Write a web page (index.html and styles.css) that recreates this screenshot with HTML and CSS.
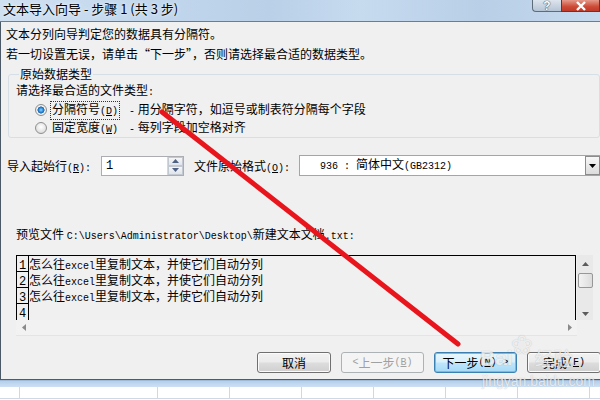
FILE: index.html
```html
<!DOCTYPE html>
<html lang="zh">
<head>
<meta charset="utf-8">
<title>文本导入向导</title>
<link rel="stylesheet" href="styles.css">
</head>
<body>
<div class="screen">
  <div class="titlebar">
    <span class="title">文本导入向导 - 步骤 1 (共 3 步)</span>
    <div class="caption-btns">
      <div class="cbtn help">?</div>
      <div class="cbtn close">
        <svg width="12" height="10" viewBox="0 0 12 10"><path d="M2 1 L10 9 M10 1 L2 9" stroke="#fff" stroke-width="2.4" fill="none"/></svg>
      </div>
    </div>
  </div>

  <div class="dialog">
    <p class="intro">文本分列向导判定您的数据具有分隔符。</p>
    <p class="intro">若一切设置无误，请单击“下一步”，否则请选择最合适的数据类型。</p>

    <fieldset class="group">
      <legend>原始数据类型</legend>
      <div class="prompt">请选择最合适的文件类型<span class="m">:</span></div>
      <div class="radio-row">
        <span class="radio checked"></span>
        <span class="rlabel focus">分隔符号<span class="m">(<u>D</u>)</span></span>
        <span class="rdesc"><span class="m">-</span> 用分隔字符，如逗号或制表符分隔每个字段</span>
      </div>
      <div class="radio-row">
        <span class="radio"></span>
        <span class="rlabel">固定宽度<span class="m">(<u>W</u>)</span></span>
        <span class="rdesc"><span class="m">-</span> 每列字段加空格对齐</span>
      </div>
    </fieldset>

    <div class="import-row">
      <span class="lbl1">导入起始行<span class="m">(<u>R</u>):</span></span>
      <div class="spin">
        <span class="spin-val m">1</span>
        <div class="spin-btns">
          <span class="sb up"><svg width="7" height="4" viewBox="0 0 7 4"><path d="M0 4 L3.5 0 L7 4Z" fill="#4d6185"/></svg></span>
          <span class="sb down"><svg width="7" height="4" viewBox="0 0 7 4"><path d="M0 0 L3.5 4 L7 0Z" fill="#4d6185"/></svg></span>
        </div>
      </div>
      <span class="lbl2">文件原始格式<span class="m">(<u>O</u>):</span></span>
      <div class="select">
        <span class="sel-val"><span class="m">936 : </span>简体中文<span class="m">(GB2312)</span></span>
        <span class="sel-btn"><svg width="7" height="4" viewBox="0 0 7 4"><path d="M0 0 L3.5 4 L7 0Z" fill="#000"/></svg></span>
      </div>
    </div>

    <div class="preview-label">预览文件 <span class="m">C:\Users\Administrator\Desktop\</span>新建文本文档<span class="m">.txt:</span></div>

    <div class="preview">
      <div class="preview-main">
        <div class="pgrid">
          <div class="prow"><span class="pnum m">1</span><span class="ptext">怎么往<span class="m">excel</span>里复制文本，并使它们自动分列</span></div>
          <div class="prow"><span class="pnum m">2</span><span class="ptext">怎么往<span class="m">excel</span>里复制文本，并使它们自动分列</span></div>
          <div class="prow"><span class="pnum m">3</span><span class="ptext">怎么往<span class="m">excel</span>里复制文本，并使它们自动分列</span></div>
          <div class="prow last"><span class="pnum m">4</span><span class="ptext"></span></div>
        </div>
        <div class="vscroll">
          <span class="arrow"><svg width="7" height="4" viewBox="0 0 7 4"><path d="M0 4 L3.5 0 L7 4Z" fill="#5b5b5b"/></svg></span>
          <span class="thumb"></span>
          <span class="vfill"></span>
          <span class="arrow"><svg width="7" height="4" viewBox="0 0 7 4"><path d="M0 0 L3.5 4 L7 0Z" fill="#5b5b5b"/></svg></span>
        </div>
      </div>
      <div class="hscroll">
        <svg width="4" height="7" viewBox="0 0 4 7"><path d="M4 0 L0 3.5 L4 7Z" fill="#8a8a8a"/></svg>
        <svg width="4" height="7" viewBox="0 0 4 7"><path d="M0 0 L4 3.5 L0 7Z" fill="#8a8a8a"/></svg>
      </div>
    </div>

    <div class="buttons">
      <div class="btn w74">取消</div>
      <div class="btn w83 disabled"><span class="m">&lt;</span> 上一步<span class="m">(<u>B</u>)</span></div>
      <div class="btn w83 default">下一步<span class="m">(<u>N</u>) &gt;</span></div>
      <div class="btn w74">完成<span class="m">(<u>F</u>)</span></div>
    </div>
  </div>

  <div class="excel">
    <div class="band"></div>
    <div class="sheet">
      <div class="col c0"></div>
      <div class="col c1"></div>
      <div class="col"></div>
      <div class="col"></div>
      <div class="col"></div>
      <div class="col"></div>
      <div class="col"></div>
      <div class="col"></div>
      <div class="col"></div>
    </div>
  </div>

  <svg class="annot" width="600" height="400" viewBox="0 0 600 400">
    <line x1="162" y1="112" x2="458" y2="344" stroke="#e8151d" stroke-width="5" stroke-linecap="round"/>
  </svg>

  <div class="watermark">
    <div class="wm-logo"><span class="wm-bai">Bai</span><span class="wm-paw">❀</span><span class="wm-jy">经验</span></div>
    <div class="wm-url">jingyan.baidu.com</div>
  </div>
</div>
</body>
</html>
```

FILE: styles.css
```css
* { box-sizing: border-box; }

html, body {
  margin: 0;
  padding: 0;
  width: 600px;
  height: 400px;
  overflow: hidden;
  background: #f0f0f0;
}

.screen {
  position: relative;
  width: 600px;
  height: 400px;
  overflow: hidden;
  display: flex;
  flex-direction: column;
  font-family: "Noto Sans CJK SC", "Liberation Sans", sans-serif;
  font-size: 12px;
  color: #000;
}

.m {
  font-family: "Liberation Mono", "DejaVu Sans Mono", monospace;
  font-size: 10px;
}

/* title bar */
.titlebar {
  height: 22px;
  flex: none;
  display: flex;
  align-items: flex-start;
  justify-content: space-between;
  background: linear-gradient(to right, #cfe0f1 0%, #c2d7ec 25%, #b9d0e8 45%, #c7dbef 60%, #b8cfe7 80%, #c6d9ed 100%);
  border-bottom: 1px solid #6f7c89;
}
.title {
  font-size: 13px;
  line-height: 17px;
  padding-left: 3px;
  color: #000;
  text-shadow: 0 0 4px #e6f0fa, 0 0 2px #eef5fc;
}
.caption-btns {
  display: flex;
  align-items: flex-start;
}
.cbtn {
  height: 12px;
  display: flex;
  align-items: center;
  justify-content: center;
  border: 1px solid #5e6c7a;
  border-top: none;
}
.help {
  width: 29px;
  border-radius: 0 0 0 4px;
  background: linear-gradient(#dde5ee, #b5c4d4);
  color: #fff;
  font-family: "Liberation Sans", sans-serif;
  font-weight: bold;
  font-size: 12px;
  line-height: 10px;
  text-shadow: 0 0 1px #333, 0 0 1px #333;
  border-right: none;
}
.close {
  width: 39px;
  background: linear-gradient(#e59a8c, #cc4b36 60%, #c0392a);
  border-color: #7a2b22;
}

/* dialog */
.dialog {
  flex: none;
  height: 358px;
  width: 640px;
  padding: 4px 0 0 5px;
  border-left: 1px solid #4b5866;
  border-bottom: 1px solid #4f5b68;
  background: #f0f0f0;
}
.intro {
  margin: 0 0 4px 0;
  line-height: 16px;
}

.group {
  margin: 0 0 0 2px;
  width: 592px;
  padding: 0 0 0 7px;
  border: 1px solid #d5dfe5;
  border-radius: 3px;
}
.group legend {
  padding: 0 1px;
  margin-left: 3px;
  line-height: 16px;
}
.prompt {
  line-height: 16px;
  margin-top: 0;
}
.radio-row {
  display: flex;
  align-items: center;
  height: 18px;
  padding-left: 19px;
}
.radio {
  width: 12px;
  height: 12px;
  border-radius: 50%;
  border: 1px solid #8e8f8f;
  background: radial-gradient(circle at 50% 40%, #ffffff 0%, #e6e6e6 55%, #cfcfcf 100%);
  margin-right: 3px;
  flex: none;
}
.radio.checked {
  background: radial-gradient(circle at 50% 50%, #8fd3ff 0%, #2c8ad6 30%, #1a5fa8 48%, #f4f4f4 52%, #dcdcdc 100%);
}
.rlabel {
  padding: 0 1px;
  line-height: 14px;
  border: 1px dotted transparent;
}
.rlabel.focus {
  border-color: #333;
}
.rdesc {
  margin-left: 9px;
  line-height: 16px;
}

.import-row {
  display: flex;
  align-items: center;
  margin-top: 17px;
  height: 21px;
}
.lbl1 {
  margin-left: 1px;
  width: 94px;
}
.spin {
  width: 83px;
  height: 20px;
  border: 1px solid #abadb3;
  background: #fff;
  display: flex;
  align-items: stretch;
  justify-content: space-between;
}
.spin-val {
  padding-left: 4px;
  font-size: 12px;
  line-height: 18px;
}
.spin-btns {
  width: 16px;
  display: flex;
  flex-direction: column;
  border-left: 1px solid #d6d6d6;
}
.sb {
  flex: 1;
  display: flex;
  align-items: center;
  justify-content: center;
  background: linear-gradient(#f6f6f6, #e0e4ea);
  border: 1px solid #c3c9d2;
}
.lbl2 {
  margin-left: 10px;
  width: 105px;
}
.select {
  width: 304px;
  height: 21px;
  border: 1px solid #a5a5a5;
  background: #fff;
  display: flex;
  align-items: center;
  justify-content: space-between;
}
.sel-val {
  padding-left: 20px;
  line-height: 18px;
}
.sel-val .m { font-size: 10px; }
.sel-btn {
  width: 15px;
  height: 19px;
  margin-right: 2px;
  display: flex;
  align-items: center;
  justify-content: center;
  background: linear-gradient(#f7f7f7, #dcdcdc);
  border: 1px solid #8c8c8c;
}

.preview-label {
  margin: 50px 0 0 10px;
  line-height: 16px;
}

.preview {
  margin: 10px 0 0 10px;
  width: 577px;
}
.preview-main {
  display: flex;
  height: 65px;
}
.pgrid {
  width: 560px;
  border: 1px solid #000;
  border-bottom: none;
  overflow: hidden;
}
.prow {
  display: flex;
  height: 16px;
}
.pnum {
  width: 12px;
  flex: none;
  border-right: 1px solid #000;
  border-bottom: 1px solid #000;
  font-size: 12px;
  line-height: 20px;
  text-align: center;
  overflow: hidden;
}
.prow.last .pnum { border-bottom: none; }
.ptext {
  line-height: 16px;
  padding-left: 0;
  white-space: nowrap;
}
.ptext .m { font-size: 10px; }
.vscroll {
  width: 16px;
  margin-left: 1px;
  display: flex;
  flex-direction: column;
  align-items: center;
  background: #e9e9e9;
  padding-top: 3px;
}
.vscroll .arrow {
  height: 12px;
  width: 15px;
  display: flex;
  align-items: center;
  justify-content: center;
}
.thumb {
  margin-top: 3px;
  width: 15px;
  height: 15px;
  border: 1px solid #979797;
  border-radius: 2px;
  background: linear-gradient(to right, #f3f3f3, #dcdcdc);
}
.vfill { flex: 1; }
.hscroll {
  height: 16px;
  width: 561px;
  display: flex;
  align-items: center;
  justify-content: space-between;
  padding: 0 5px 0 6px;
  background: #f2f2f2;
  border-bottom: 1px solid #e4e4e4;
}

.buttons {
  display: flex;
  margin: 16px 0 0 251px;
  gap: 10px;
}
.btn {
  height: 21px;
  border: 1px solid #707070;
  border-radius: 3px;
  background: linear-gradient(#f2f2f2 0%, #ebebeb 48%, #dddddd 52%, #cfcfcf 100%);
  display: flex;
  align-items: center;
  justify-content: center;
  line-height: 16px;
  box-shadow: inset 0 0 0 1px #fbfbfb;
}
.w74 { width: 74px; }
.w83 { width: 83px; }
.btn.disabled {
  color: #a0a0a0;
  border-color: #adb2b5;
  background: #f4f4f4;
  box-shadow: none;
}
.btn.default {
  border-color: #3c7fb1;
  box-shadow: inset 0 0 0 1px #48d0f8;
  background: linear-gradient(#eaf6fd 0%, #d9f0fc 48%, #bee6fd 52%, #a7d9f5 100%);
}

/* excel strip */
.excel {
  flex: 1;
  display: flex;
  flex-direction: column;
}
.band {
  height: 7px;
  background: linear-gradient(#b3cfec, #cfe1f3);
  border-top: 1px solid #9fbbd8;
}
.sheet {
  flex: 1;
  display: grid;
  grid-template-columns: 19px 138px repeat(7, 72px);
  background: #fff;
}
.col {
  border-left: 1px solid #d0d7e5;
  border-bottom: 1px solid #d0d7e5;
  height: 12px;
}
.col.c0 { border-left: none; }

/* annotation overlay */
.annot {
  position: absolute;
  left: 0;
  top: 0;
  pointer-events: none;
}

.watermark {
  position: absolute;
  left: 480px;
  top: 322px;
  width: 118px;
  color: rgba(255, 255, 255, 0.75);
  text-shadow: 0 0 1px rgba(90, 90, 90, 0.4);
  pointer-events: none;
}
.wm-logo {
  display: flex;
  align-items: flex-end;
  height: 48px;
  font-family: "Liberation Sans", sans-serif;
}
.wm-bai {
  font-size: 21px;
  font-weight: bold;
  line-height: 24px;
}
.wm-paw {
  font-size: 26px;
  line-height: 46px;
  margin: 0 -2px;
  align-self: flex-start;
}
.wm-jy {
  font-family: "Noto Sans CJK SC", sans-serif;
  font-size: 19px;
  line-height: 24px;
  margin-left: 4px;
}
.wm-url {
  font-family: "Liberation Sans", sans-serif;
  font-size: 14px;
  line-height: 22px;
  margin-left: 2px;
}
```
